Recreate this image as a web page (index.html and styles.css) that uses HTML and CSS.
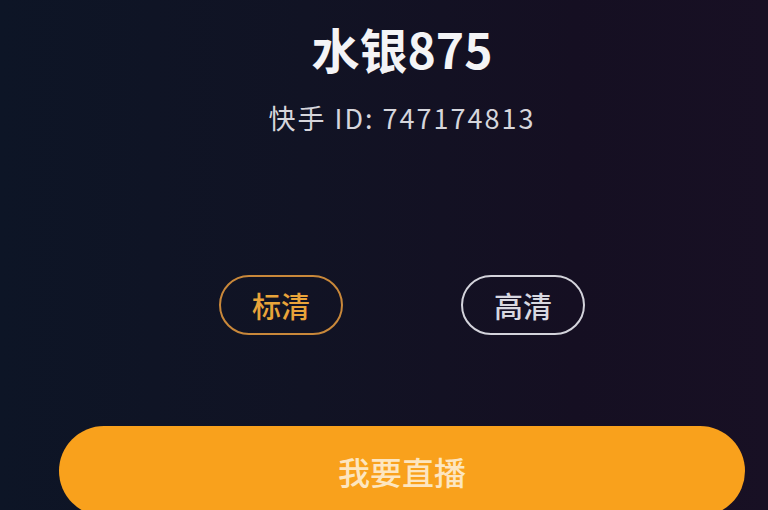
FILE: index.html
```html
<!DOCTYPE html>
<html lang="zh-CN">
<head>
<meta charset="utf-8">
<link rel="stylesheet" href="styles.css">
</head>
<body>
<div class="page">
  <div class="profile">
    <h1 class="name">水银875</h1>
    <p class="uid">快手 ID: 747174813</p>
  </div>
  <div class="quality">
    <span class="pill pill-active">标清</span>
    <span class="pill">高清</span>
  </div>
  <button class="live-btn">我要直播</button>
</div>
</body>
</html>
```
FILE: styles.css
```css
html, body {
  margin: 0;
  padding: 0;
  width: 768px;
  height: 510px;
  overflow: hidden;
}
body {
  background: linear-gradient(90deg, #0d1526 0%, #111324 40%, #150f22 75%, #181024 100%);
  font-family: "Noto Sans CJK SC", "Noto Sans", sans-serif;
}
.page {
  display: flex;
  flex-direction: column;
  align-items: center;
  padding-left: 36px;
  box-sizing: border-box;
  width: 768px;
}
.profile {
  display: flex;
  flex-direction: column;
  align-items: center;
  padding-top: 18px;
}
.name {
  margin: 0;
  font-size: 48px;
  line-height: 60px;
  font-weight: 700;
  color: #f4f4f6;
}
.uid {
  margin: 22px 0 0;
  font-size: 27px;
  line-height: 36px;
  color: #d6d6dc;
  letter-spacing: 2px;
}
.quality {
  display: flex;
  gap: 118px;
  margin-top: 139px;
}
.pill {
  width: 124px;
  height: 60px;
  box-sizing: border-box;
  border: 2.5px solid #d3d3db;
  border-radius: 30px;
  display: flex;
  align-items: center;
  justify-content: center;
  font-size: 29px;
  font-weight: 500;
  color: #d8d8e0;
}
.pill-active {
  border-color: #c9883a;
  color: #e9a43a;
}
.live-btn {
  margin-top: 91px;
  width: 686px;
  height: 90px;
  border: none;
  border-radius: 45px;
  background: #f9a11c;
  color: #fde6c0;
  font-family: "Noto Sans CJK SC", "Noto Sans", sans-serif;
  font-size: 32px;
  font-weight: 500;
  display: flex;
  align-items: center;
  justify-content: center;
  padding: 0;
}
```
